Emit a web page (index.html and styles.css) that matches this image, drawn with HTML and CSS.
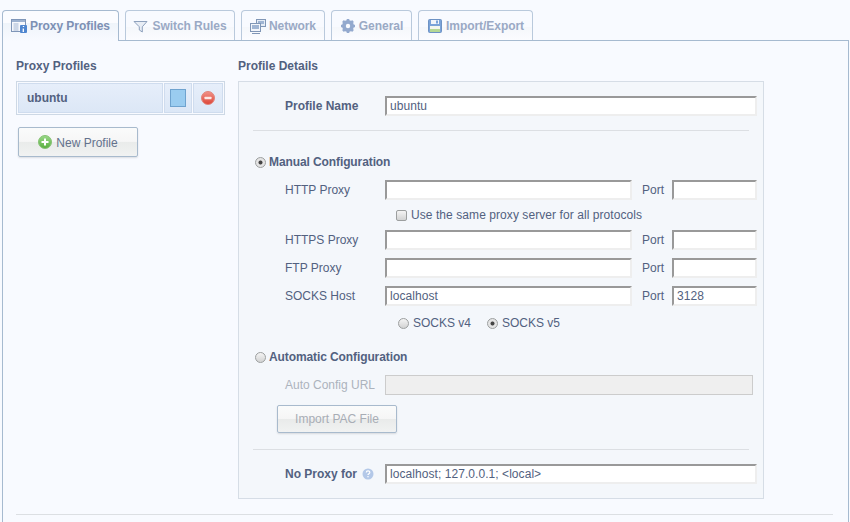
FILE: index.html
```html
<!DOCTYPE html>
<html lang="en">
<head>
<meta charset="UTF-8" />
<meta name="viewport" content="width=device-width, initial-scale=1" />
<title>Proxy Profiles</title>
<link rel="stylesheet" href="styles.css">
</head>
<body>

  <!-- Tabs -->
  <div class="tabs">
    <div class="tab active tab-profiles">
      <svg class="tab-icon" viewBox="0 0 16 16" width="16" height="16">
        <rect x="0.5" y="1.5" width="14" height="12" fill="#f6f8fc" stroke="#7f96b8"/>
        <rect x="1" y="2" width="13" height="2" fill="#9db2d0"/>
        <path d="M2.5 6h5M2.500 8h5M2.500 10h5M2.500 12h5" stroke="#a3b6d2"/>
        <rect x="9" y="7" width="7" height="8" rx="1" fill="#4f86cf"/>
        <path d="M12.500 8v1M12.300 10.500v3.500" stroke="#fff" stroke-width="1.300"/>
      </svg>
      Proxy Profiles
    </div>
    <div class="tab tab-rules">
      <svg class="tab-icon" viewBox="0 0 16 16" width="16" height="16">
        <path d="M1 3.500h13L9.300 8.800v5.200l-3-2V8.800z" fill="#e8edf5" stroke="#8ea1bd"/>
      </svg>
      Switch Rules
    </div>
    <div class="tab tab-network">
      <svg class="tab-icon" viewBox="0 0 16 16" width="16" height="16">
        <rect x="6.500" y="1.500" width="9" height="7" fill="#e6ecf5" stroke="#8096b6"/>
        <rect x="8" y="3" width="6" height="3" fill="#a0b5d3"/>
        <rect x="0.500" y="5.500" width="10" height="8" fill="#f2f5fa" stroke="#8096b6"/>
        <rect x="2" y="7" width="7" height="4" fill="#a0b5d3"/>
        <path d="M2 15.500h8" stroke="#8096b6"/>
      </svg>
      Network
    </div>
    <div class="tab tab-general">
      <svg class="tab-icon" viewBox="0 0 16 16" width="16" height="16">
        <circle cx="8" cy="8" r="4.500" fill="none" stroke="#93a9ce" stroke-width="3"/>
        <path d="M8 1v14M1 8h14M3 3l10 10M13 3L3 13" stroke="#93a9ce" stroke-width="2.600"/>
        <circle cx="8" cy="8" r="2.200" fill="#f8faff"/>
      </svg>
      General
    </div>
    <div class="tab tab-import">
      <svg class="tab-icon" viewBox="0 0 16 16" width="16" height="16">
        <rect x="1.500" y="1.500" width="13" height="13" rx="1" fill="#7ba3d9" stroke="#6d92c4"/>
        <rect x="4" y="2" width="8" height="4" fill="#f2f5fa"/>
        <rect x="9" y="2.500" width="2" height="3" fill="#7ba3d9"/>
        <rect x="3" y="8" width="10" height="6" fill="#f4f7ee"/>
        <rect x="3" y="11" width="10" height="3" fill="#b5d894"/>
      </svg>
      Import/Export
    </div>
  </div>

  <div class="content">
    <div class="columns">

      <!-- Left column: profile list -->
      <div class="sidebar">
        <h3>Proxy Profiles</h3>
        <div class="profile-list">
          <div class="profile-cell profile-name">ubuntu</div>
          <div class="profile-cell profile-color"><span class="swatch"></span></div>
          <div class="profile-cell profile-delete">
            <svg viewBox="0 0 14 14" width="14" height="14">
              <defs>
                <linearGradient id="redBall" x1="0" y1="0" x2="0" y2="1">
                  <stop offset="0" stop-color="#f2938a"/>
                  <stop offset="1" stop-color="#dc4436"/>
                </linearGradient>
              </defs>
              <circle cx="7" cy="7" r="6.500" fill="url(#redBall)" stroke="#e0857b"/>
              <rect x="3.500" y="5.800" width="7" height="2.400" rx="0.500" fill="#fde8e5"/>
            </svg>
          </div>
        </div>
        <button class="btn new-profile">
          <svg viewBox="0 0 14 14" width="14" height="14">
            <defs>
              <linearGradient id="greenBall" x1="0" y1="0" x2="0" y2="1">
                <stop offset="0" stop-color="#9bd98a"/>
                <stop offset="1" stop-color="#58ae3e"/>
              </linearGradient>
            </defs>
            <circle cx="7" cy="7" r="6.500" fill="url(#greenBall)" stroke="#86c274"/>
            <path d="M7 3.500v7M3.500 7h7" stroke="#fff" stroke-width="2"/>
          </svg>
          <span class="btn-text">New Profile</span>
        </button>
      </div>

      <!-- Right column: details -->
      <div class="details">
        <h3>Profile Details</h3>
        <div class="panel">

          <div class="row name-row">
            <label class="field-label strong">Profile Name</label>
            <input type="text" class="input wide-full" value="ubuntu" />
          </div>

          <hr class="sep sep-name" />

          <div class="mode mode-manual">
            <input type="radio" name="mode" class="radio" checked />
            <span class="strong">Manual Configuration</span>
          </div>

          <div class="row row-http">
            <label class="field-label">HTTP Proxy</label>
            <input type="text" class="input host" />
            <label class="port-label">Port</label>
            <input type="text" class="input port" />
          </div>

          <div class="same-proxy">
            <input type="checkbox" class="check" />
            <span>Use the same proxy server for all protocols</span>
          </div>

          <div class="row row-https">
            <label class="field-label">HTTPS Proxy</label>
            <input type="text" class="input host" />
            <label class="port-label">Port</label>
            <input type="text" class="input port" />
          </div>

          <div class="row row-next">
            <label class="field-label">FTP Proxy</label>
            <input type="text" class="input host" />
            <label class="port-label">Port</label>
            <input type="text" class="input port" />
          </div>

          <div class="row row-next">
            <label class="field-label">SOCKS Host</label>
            <input type="text" class="input host" value="localhost" />
            <label class="port-label">Port</label>
            <input type="text" class="input port" value="3128" />
          </div>

          <div class="socks">
            <span class="socks-opt socks-v4"><input type="radio" name="socks" class="radio" /> SOCKS v4</span>
            <span class="socks-opt"><input type="radio" name="socks" class="radio" checked /> SOCKS v5</span>
          </div>

          <div class="mode mode-auto">
            <input type="radio" name="mode" class="radio" />
            <span class="strong">Automatic Configuration</span>
          </div>

          <div class="row row-next">
            <label class="field-label disabled">Auto Config URL</label>
            <input type="text" class="input-disabled" disabled />
          </div>

          <button class="btn import-pac" disabled>Import PAC File</button>

          <hr class="sep sep-pac" />

          <div class="row no-proxy">
            <label class="field-label strong">No Proxy for
              <svg class="help" viewBox="0 0 12 12" width="12" height="12">
                <circle cx="6" cy="6" r="5.500" fill="#b3c8e8"/>
                <path d="M4.300 4.600c0-2.200 3.500-2.200 3.500-.2 0 1.300-1.800 1.300-1.800 2.600" fill="none" stroke="#fff" stroke-width="1.200"/>
                <rect x="5.400" y="8" width="1.200" height="1.300" fill="#fff"/>
              </svg>
            </label>
            <input type="text" class="input wide-full" value="localhost; 127.0.0.1; <local>" />
          </div>

        </div>
      </div>
    </div>

    <hr class="footer-line" />
  </div>

</body>
</html>
```

FILE: styles.css
```css
html, body {
  height: 522px;
  overflow: hidden;
}
body {
  margin: 0;
  padding: 10px 1px 0 2px;
  background: #f8faff;
  font-family: "Liberation Sans", Arial, sans-serif;
  font-size: 12px;
  color: #526180;
}
.tabs {
  display: flex;
  gap: 6px;
  height: 30px;
  position: relative;
  z-index: 1;
}
.tab {
  display: flex;
  align-items: center;
  justify-content: center;
  gap: 3px;
  box-sizing: border-box;
  height: 30px;
  border: 1px solid #b9c9dc;
  border-bottom: none;
  border-radius: 4px 4px 0 0;
  font-weight: bold;
  letter-spacing: -0.05px;
  color: #9aa9c5;
  background: linear-gradient(#f8faff 0%, #f8faff 55%, #f5f7fb 56%, #fbfcff 100%);
}
.tab.active {
  height: 31px;
  border-color: #a6bad0;
  color: #7d90b4;
  background: linear-gradient(#fbfcff 0%, #fbfcff 40%, #eff4fa 41%, #f8faff 100%);
}
.tab-profiles {
  width: 117px;
}
.tab-rules {
  width: 110px;
}
.tab-network {
  width: 84px;
}
.tab-general {
  width: 81px;
}
.tab-import {
  width: 115px;
}
.tab-icon {
  flex: none;
}
.content {
  box-sizing: border-box;
  height: 482px;
  padding: 0 15px 0 13px;
  border-top: 1px solid #a6bad0;
  border-left: 1px solid #a6bad0;
  border-right: 1px solid #a6bad0;
}
.columns {
  display: flex;
}
h3 {
  margin: 0;
  height: 40px;
  line-height: 50px;
  font-size: 12px;
  font-weight: bold;
  color: #526180;
}
.sidebar {
  width: 222px;
  flex: none;
}
.profile-list {
  display: flex;
  gap: 1px;
  box-sizing: border-box;
  width: 209px;
  height: 34px;
  padding: 1px;
  border: 1px solid #cdd8e5;
  background: #f8faff;
}
.profile-cell {
  display: flex;
  align-items: center;
  justify-content: center;
  border: 1px solid #cfdcee;
  background: linear-gradient(#e6eefa, #dce7f6);
}
.profile-name {
  flex: 1;
  justify-content: flex-start;
  padding-left: 8px;
  font-weight: bold;
  color: #526180;
}
.profile-color {
  width: 26px;
}
.profile-delete {
  width: 28px;
}
.swatch {
  box-sizing: border-box;
  width: 16px;
  height: 18px;
  border: 1px solid #6fa3cf;
  background: #9accf0;
}
.btn {
  display: flex;
  align-items: center;
  justify-content: center;
  gap: 4px;
  box-sizing: border-box;
  padding: 0;
  border: 1px solid #a8bacd;
  border-radius: 2px;
  font-family: inherit;
  font-size: 12px;
  color: #63728c;
  background: linear-gradient(#fafbfb 0%, #f6f6f6 48%, #e9ebea 50%, #f1f2f2 100%);
  box-shadow: 0 1px 2px rgba(0,0,0,0.12);
}
.btn-text {
  padding-top: 1px;
}
.new-profile {
  width: 120px;
  height: 30px;
  margin: 12px 0 0 2px;
}
.details {
  width: 526px;
  flex: none;
}
.panel {
  box-sizing: border-box;
  height: 418px;
  padding-top: 14px;
  border: 1px solid #d6dde6;
  background: #f4f7fb;
}
.row {
  display: flex;
  align-items: center;
  height: 20px;
  padding-left: 46px;
}
.field-label {
  width: 100px;
  flex: none;
}
.strong {
  font-weight: bold;
}
.disabled {
  color: #acb3bd;
}
.input {
  box-sizing: border-box;
  height: 20px;
  margin: 0;
  padding: 0 3px;
  border-style: solid;
  border-width: 2px;
  border-color: #999 #eee #eee #999;
  border-radius: 0;
  outline: none;
  background: #fff;
  font-family: inherit;
  font-size: 12px;
  letter-spacing: 0.06px;
  color: #526180;
}
.wide-full {
  width: 372px;
}
.host {
  width: 247px;
}
.port {
  width: 85px;
}
.port-label {
  width: 40px;
  padding-left: 10px;
  box-sizing: border-box;
}
.input-disabled {
  box-sizing: border-box;
  width: 368px;
  height: 20px;
  margin: 0;
  border: 1px solid #ccc;
  background: #efefef;
}
.sep {
  height: 1px;
  margin: 0 14px;
  border: none;
  background: #dcdfe3;
}
.sep-name {
  margin-top: 14px;
}
.sep-pac {
  margin-top: 16px;
}
.mode {
  display: flex;
  align-items: center;
  gap: 3px;
  height: 20px;
  padding-left: 16px;
  letter-spacing: -0.1px;
}
.mode-manual {
  margin-top: 21px;
}
.mode-auto {
  margin-top: 14px;
}
.row-http {
  margin-top: 8px;
}
.row-https {
  margin-top: 5px;
}
.row-next {
  margin-top: 8px;
}
.no-proxy {
  margin-top: 14px;
}
.same-proxy {
  display: flex;
  align-items: center;
  gap: 4px;
  height: 20px;
  margin-top: 5px;
  padding-left: 157px;
  letter-spacing: 0.07px;
}
.socks {
  display: flex;
  align-items: center;
  height: 20px;
  margin-top: 7px;
  padding-left: 159px;
}
.socks-opt {
  display: flex;
  align-items: center;
  gap: 4px;
}
.socks-v4 {
  width: 89px;
}
.radio,
.check {
  appearance: none;
  box-sizing: border-box;
  flex: none;
  width: 11px;
  height: 11px;
  margin: 0;
  border: 1px solid #9c9f9f;
  background: linear-gradient(#f4f4f4, #d2d3d3);
}
.radio {
  border-radius: 50%;
}
.radio:checked {
  background: radial-gradient(circle, #444 0, #444 1.6px, #e4e4e4 2.4px);
}
.check {
  border-radius: 2px;
}
.import-pac {
  width: 120px;
  height: 28px;
  margin: 10px 0 0 38px;
  color: #a8adb5;
}
.help {
  vertical-align: -2px;
  margin-left: 2px;
}
.footer-line {
  height: 1px;
  margin: 15px 0 0;
  border: none;
  background: #dcdfe3;
}
```
